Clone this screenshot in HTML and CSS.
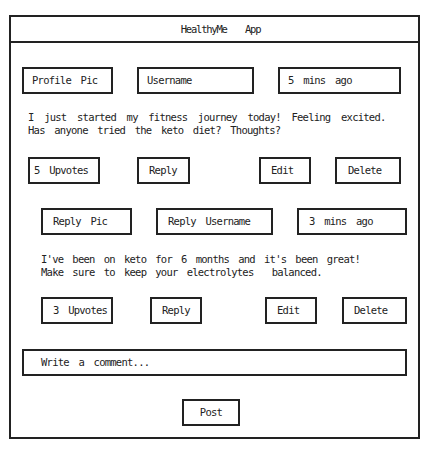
FILE: index.html
```html
<!DOCTYPE html>
<html>
<head>
<meta charset="utf-8">
<link rel="stylesheet" href="styles.css">
</head>
<body>
<div class="app">
  <div class="header">HealthyMe  App</div>
  <div class="content">
    <div class="row head-row">
      <div class="box pic">Profile Pic</div>
      <div class="box user">Username</div>
      <div class="box time">5 mins ago</div>
    </div>
    <p class="text post-text">I just started my fitness journey today! Feeling excited.<br><span class="line-tight">Has anyone tried the keto diet? Thoughts?</span></p>
    <div class="row actions">
      <div class="box btn upv first">5 Upvotes</div>
      <div class="box btn a1-reply">Reply</div>
      <div class="box btn a1-edit">Edit</div>
      <div class="box btn a1-del">Delete</div>
    </div>
    <div class="reply">
      <div class="row head-row reply-head">
        <div class="box pic">Reply Pic</div>
        <div class="box user">Reply Username</div>
        <div class="box rtime">3 mins ago</div>
      </div>
      <p class="text reply-text">I've been on keto for 6 months and it's been great!<br>Make sure to keep your electrolytes  balanced.</p>
      <div class="row actions reply-actions">
        <div class="box btn upv">3 Upvotes</div>
        <div class="box btn a2-reply">Reply</div>
        <div class="box btn a2-edit">Edit</div>
        <div class="box btn a2-del">Delete</div>
      </div>
    </div>
    <div class="box comment">Write a comment...</div>
    <div class="box post">Post</div>
  </div>
</div>
</body>
</html>
```
FILE: styles.css
```css
html, body {
  margin: 0;
  background: #ffffff;
}
body {
  padding: 15px 0 0 9px;
  font-family: "DejaVu Sans Mono", "Liberation Mono", monospace;
  font-size: 10.5px;
  letter-spacing: -0.75px;
  word-spacing: 4px;
  color: #222222;
}
.app {
  width: 411px;
  height: 424px;
  box-sizing: border-box;
  border: 2px solid #222222;
}
.header {
  height: 26px;
  box-sizing: border-box;
  border-bottom: 2px solid #222222;
  display: flex;
  align-items: center;
  justify-content: center;
  padding: 0 0 1px 12px;
  letter-spacing: -1.2px;
  white-space: pre;
}
.content {
  padding: 24px 0 0 11px;
}
.row {
  display: flex;
}
.box {
  height: 27px;
  box-sizing: border-box;
  border: 2px solid #222222;
  display: flex;
  align-items: center;
  padding: 0 0 1px 8px;
  white-space: pre;
  flex: none;
}
.head-row {
  gap: 24px;
}
.pic { width: 91px; }
.user { width: 117px; }
.time { width: 123px; }
.rtime { width: 110px; }
.reply-head .box { padding-left: 10px; }
.text {
  margin: 0;
  line-height: 13px;
  white-space: pre;
}
.post-text {
  margin: 17px 0 0 6px;
  word-spacing: 5px;
}
.line-tight {
  word-spacing: 4px;
}
.actions {
  margin: 20px 0 0 6px;
}
.btn {
  padding-left: 10px;
}
.upv { width: 72px; }
.upv.first { padding-left: 4px; }
.a1-reply { width: 53px; margin-left: 37px; }
.a1-edit { width: 52px; margin-left: 69px; }
.a1-del { width: 66px; margin-left: 24px; padding-left: 11px; }
.reply {
  margin: 24px 0 0 19px;
}
.reply-text {
  margin: 18px 0 0 0;
  word-spacing: 3.5px;
}
.reply-actions {
  margin: 18px 0 0 0;
}
.a2-reply { width: 52px; margin-left: 37px; }
.a2-edit { width: 52px; margin-left: 63px; }
.a2-del { width: 65px; margin-left: 25px; }
.comment {
  width: 385px;
  margin-top: 25px;
  padding-left: 17px;
}
.post {
  width: 58px;
  margin: 23px 0 0 160px;
  padding-left: 0;
  justify-content: center;
}
```
